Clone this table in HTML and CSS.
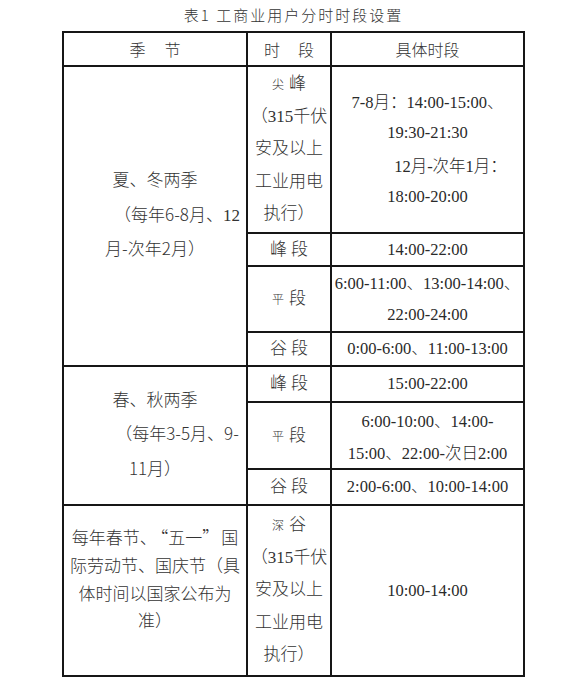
FILE: index.html
```html
<!DOCTYPE html>
<html lang="zh-CN">
<head>
<meta charset="utf-8">
<title>表1 工商业用户分时时段设置</title>
<link rel="stylesheet" href="styles.css">
</head>
<body>
<div class="page">
  <div class="title">表1 工商业用户分时时段设置</div>
  <div class="grid">
    <div class="cell head c1">季<span class="sp"></span>节</div>
    <div class="cell head c2">时<span class="sp sp-s"></span>段</div>
    <div class="cell head c3">具体时段</div>

    <div class="cell c1 season span4">
      <div class="ln">夏、冬两季</div>
      <div class="ln shift">（每年<span class="cjk">6-8</span>月、<span class="num">12</span></div>
      <div class="ln">月<span class="cjk">-</span>次年<span class="cjk">2</span>月）</div>
    </div>
    <div class="cell c2 period multi">
      <div class="ln"><span class="small">尖</span>峰</div>
      <div class="ln">（<span class="num">315</span>千伏</div>
      <div class="ln">安及以上</div>
      <div class="ln">工业用电</div>
      <div class="ln">执行）</div>
    </div>
    <div class="cell c3 times">
      <div class="para">
        <div class="ln">7-8月：14:00-15:00、</div>
        <div class="ln">19:30-21:30</div>
      </div>
      <div class="para">
        <div class="ln shift2">12月-次年1月：</div>
        <div class="ln">18:00-20:00</div>
      </div>
    </div>

    <div class="cell c2 period"><div class="ln">峰 段</div></div>
    <div class="cell c3 times"><div class="ln">14:00-22:00</div></div>

    <div class="cell c2 period"><div class="ln"><span class="small">平</span>段</div></div>
    <div class="cell c3 times lh31">
      <div class="ln">6:00-11:00、13:00-14:00、</div>
      <div class="ln">22:00-24:00</div>
    </div>

    <div class="cell c2 period"><div class="ln">谷 段</div></div>
    <div class="cell c3 times"><div class="ln">0:00-6:00、11:00-13:00</div></div>

    <div class="cell c1 season span3">
      <div class="ln">春、秋两季</div>
      <div class="ln shift">（每年<span class="cjk">3-5</span>月、<span class="cjk">9-</span></div>
      <div class="ln"><span class="cjk">11</span>月）</div>
    </div>
    <div class="cell c2 period"><div class="ln">峰 段</div></div>
    <div class="cell c3 times"><div class="ln">15:00-22:00</div></div>

    <div class="cell c2 period"><div class="ln"><span class="small">平</span>段</div></div>
    <div class="cell c3 times lh32">
      <div class="ln">6:00-10:00、14:00-</div>
      <div class="ln">15:00、22:00-次日2:00</div>
    </div>

    <div class="cell c2 period"><div class="ln">谷 段</div></div>
    <div class="cell c3 times"><div class="ln">2:00-6:00、10:00-14:00</div></div>

    <div class="cell c1 season holiday">
      <div class="ln">每年春节、<span class="cjk q">“五一”</span>国</div>
      <div class="ln">际劳动节、国庆节（具</div>
      <div class="ln">体时间以国家公布为</div>
      <div class="ln">准）</div>
    </div>
    <div class="cell c2 period multi">
      <div class="ln"><span class="small">深</span>谷</div>
      <div class="ln">（<span class="num">315</span>千伏</div>
      <div class="ln">安及以上</div>
      <div class="ln">工业用电</div>
      <div class="ln">执行）</div>
    </div>
    <div class="cell c3 times"><div class="ln">10:00-14:00</div></div>
  </div>
</div>
</body>
</html>
```

FILE: styles.css
```css
html, body {
  margin: 0;
  padding: 0;
  background: #ffffff;
}

body {
  font-family: "Liberation Serif", "Noto Sans CJK SC", serif;
  font-weight: 300;
  color: #333333;
}

.page {
  margin-left: 62px;
  width: 463px;
}

.title {
  height: 31px;
  line-height: 30px;
  text-align: center;
  font-family: "Noto Sans CJK SC", sans-serif;
  font-size: 15px;
  font-weight: 300;
  letter-spacing: 2px;
  color: #333333;
  white-space: nowrap;
}

.grid {
  display: grid;
  grid-template-columns: 182px 82px 191px;
  grid-template-rows: 32px 165px 31px 64px 32px 34px 65px 34px 169px;
  gap: 2px;
  padding: 2px;
  background: #161616;
  width: max-content;
}

.cell {
  background: #ffffff;
  display: flex;
  flex-direction: column;
  justify-content: center;
  align-items: center;
  text-align: center;
  overflow: hidden;
}

.c1 { grid-column: 1; }
.c2 { grid-column: 2; }
.c3 { grid-column: 3; }

.span4 { grid-row-end: span 4; }
.span3 { grid-row-end: span 3; }

.ln {
  white-space: nowrap;
}

.head {
  font-family: "Noto Sans CJK SC", sans-serif;
  font-size: 16px;
  line-height: 30px;
  flex-direction: row;
}

.sp {
  display: inline-block;
  width: 19px;
}

.sp-s {
  width: 18px;
}

.season {
  font-size: 17px;
  line-height: 32.5px;
}

.season .shift {
  padding-left: 44px;
}

.holiday {
  line-height: 27.7px;
  padding-bottom: 22px;
}

.q {
  margin: 0 2px 0 3px;
}

.period {
  font-size: 17px;
  line-height: 30px;
}

.period.multi {
  line-height: 32.5px;
}

.small {
  display: inline-block;
  font-family: "Noto Sans CJK SC", sans-serif;
  font-size: 12px;
  margin-right: 5px;
}

.cjk {
  font-family: "Noto Sans CJK SC", sans-serif;
}

.num {
  font-family: "Liberation Serif", serif;
}

.times {
  font-size: 16.5px;
  line-height: 30px;
  color: #2a2a2a;
}

.times .para + .para {
  margin-top: 4px;
}

.times .shift2 {
  padding-left: 46px;
}

.lh31 {
  line-height: 31px;
}

.lh32 {
  line-height: 32px;
  padding-top: 4px;
}
```
